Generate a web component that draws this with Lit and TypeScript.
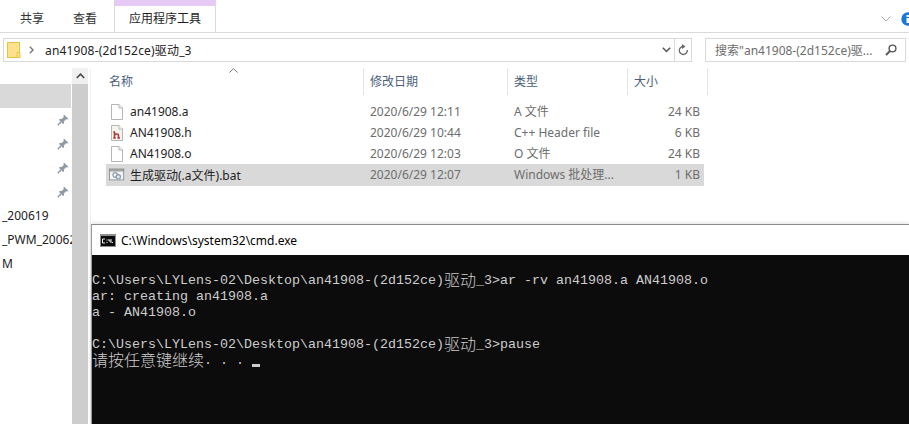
import { LitElement, html, css } from "lit";
import { customElement } from "lit/decorators.js";

const pin = html`<svg class="pin" width="12" height="12" viewBox="0 0 12 12"><path d="M7 0.5 L11.5 5 L10.3 5.6 L9 5.2 L6.9 7.4 L7 9.4 L6 10 L2 6 L2.6 5 L4.6 5.1 L6.8 3 L6.4 1.7 Z" fill="#8f9aa3"/><path d="M3.6 8 L0.8 11.2 L4 8.4" fill="none" stroke="#8f9aa3" stroke-width="1.2"/></svg>`;

const blank = html`<svg width="16" height="18" viewBox="0 0 16 18"><path d="M2.5 1.5 H10 L13.5 5 V16.5 H2.5 Z" fill="#fff" stroke="#b5b5b5"/><path d="M10 1.5 V5 H13.5" fill="#f1f1f1" stroke="#b5b5b5"/></svg>`;
const hfile = html`<svg width="16" height="18" viewBox="0 0 16 18"><path d="M2.5 1.5 H10 L13.5 5 V16.5 H2.5 Z" fill="#f5f5ee" stroke="#b5b5b5"/><path d="M10 1.5 V5 H13.5" fill="#fff" stroke="#b5b5b5"/><path d="M5.5 8 V14 M4.2 8 H6 M5.5 11 Q6.5 10 8 10 Q9.5 10 9.5 11.5 V14 M4.2 14 H6.8 M8.4 14 H11" fill="none" stroke="#b03a3a" stroke-width="1.6"/></svg>`;
const bat = html`<svg width="18" height="16" viewBox="0 0 18 16"><rect x="0.5" y="1.5" width="16" height="12" fill="#f4f4f4" stroke="#8d8d8d"/><rect x="0.5" y="1.5" width="16" height="2" fill="#b9b9b9" stroke="#8d8d8d"/><circle cx="7" cy="8" r="2.6" fill="none" stroke="#8c9aa8" stroke-width="1.3"/><circle cx="10.5" cy="10" r="2.4" fill="#dfe6ec" stroke="#7f97b0" stroke-width="1.2"/></svg>`;

const rows = [
  { name: "an41908.a", date: "2020/6/29 12:11", type: "A 文件", size: "24 KB", icon: blank },
  { name: "AN41908.h", date: "2020/6/29 10:44", type: "C++ Header file", size: "6 KB", icon: hfile },
  { name: "AN41908.o", date: "2020/6/29 12:03", type: "O 文件", size: "24 KB", icon: blank },
  { name: "生成驱动(.a文件).bat", date: "2020/6/29 12:07", type: "Windows 批处理...", size: "1 KB", icon: bat, sel: true },
];

const prompt = html`<span>C:\\Users\\LYLens-02\\Desktop\\an41908-(2d152ce)</span><span class="cjk">驱动</span><span>_3&gt;</span>`;

@customElement("app-root")
export class AppRoot extends LitElement {
  static styles = css`
    :host {
      display: block;
      position: relative;
      width: 909px;
      height: 424px;
      overflow: hidden;
      background: #fff;
      font-family: "Noto Sans", "Noto Sans CJK SC", sans-serif;
      font-size: 12px;
      color: #1e1e1e;
    }
    .ribbon {
      height: 32px;
      display: flex;
      align-items: flex-end;
      border-bottom: 1px solid #dadada;
    }
    .tab {
      height: 26px;
      line-height: 26px;
      color: #333;
    }
    .t1 { margin-left: 20px; width: 53px; }
    .t2 { width: 41px; }
    .t3 {
      width: 100px;
      text-align: center;
      height: 26px;
      border-left: 1px solid #dadada;
      border-right: 1px solid #dadada;
      border-top: 6px solid #e6c9f5;
      line-height: 26px;
      background: #fff;
    }
    .help {
      margin-left: auto;
      display: flex;
      align-items: center;
      height: 27px;
      padding-top: 5px;
      gap: 10px;
      width: 28px;
      overflow: hidden;
    }
    .help svg { flex: none; }
    .bars {
      height: 24px;
      margin: 5px 3px 0 3px;
      display: flex;
      gap: 13px;
    }
    .addr {
      width: 687px;
      border: 1px solid #d9d9d9;
      height: 22px;
      display: flex;
      align-items: center;
    }
    .folder { margin-left: 3px; flex: none; }
    .chev { margin-left: 8px; flex: none; }
    .crumb { margin-left: 11px; flex: 1; color: #222; letter-spacing: 0.17px; }
    .dd { flex: none; margin-right: 3px; }
    .refresh {
      flex: none;
      width: 16px;
      height: 22px;
      border-left: 1px solid #d9d9d9;
      display: flex;
      align-items: center;
      justify-content: center;
    }
    .search {
      border: 1px solid #d9d9d9;
      height: 22px;
      display: flex;
      align-items: center;
      color: #6d6d6d;
      padding-left: 9px;
      width: 190px;
    }
    .search span { flex: 1; white-space: nowrap; }
    .search svg { margin-right: 8px; flex: none; }
    .main {
      display: flex;
      margin-top: 6px;
    }
    .side { width: 72px; flex: none; padding-top: 16px; }
    .side .item {
      height: 24px;
      padding-left: 2px;
      white-space: nowrap;
      overflow: hidden;
      display: flex;
      align-items: center;
      justify-content: flex-end;
      color: #222;
      box-sizing: border-box;
    }
    .side .item.txt { justify-content: flex-start; padding-bottom: 2px; }
    .side .item.on { background: #d9d9d9; width: 71px; }
    .pin { margin-right: 3px; }
    .sb { width: 16px; flex: none; height: 356px; background: #cdcdcd; }
    .sb .up {
      height: 16px;
      background: #f0f0f0;
      display: flex;
      align-items: center;
      justify-content: center;
    }
    .sep { width: 1px; flex: none; background: #f0f0f0; height: 356px; margin-left: 2px; }
    .list { margin-left: 15px; flex: none; width: 602px; position: relative; }
    .hdr {
      display: grid;
      grid-template-columns: 258px 144px 120px 80px;
      height: 27px;
    }
    .hdr div {
      border-right: 1px solid #e5e5e5;
      padding-left: 6px;
      line-height: 27px;
      color: #4c607a;
    }
    .hdr div:first-child { padding-left: 3px; }
    .sort { position: absolute; left: 123px; top: 0; }
    .rows { margin-top: 6px; width: 598px; }
    .row {
      display: grid;
      grid-template-columns: 258px 144px 120px 76px;
      height: 21px;
      line-height: 21px;
      color: #6d6d6d;
    }
    .row.sel { background: #d9d9d9; height: 22px; }
    .row > div { padding-left: 6px; white-space: nowrap; }
    .row .n {
      display: flex;
      align-items: center;
      gap: 5px;
      padding-left: 3px;
      color: #1e1e1e;
    }
    .row .ic { width: 16px; height: 18px; display: flex; align-items: center; flex: none; }
    .row .s { text-align: right; padding: 0 4px 0 0; }
    .cmd {
      position: absolute;
      left: 91px;
      top: 224px;
      width: 818px;
      height: 200px;
      border-top: 1px solid #8a8a8a;
      border-left: 1px solid #9a9a9a;
      box-sizing: border-box;
      display: flex;
      flex-direction: column;
      box-shadow: 0 -1px 4px rgba(0,0,0,.12);
    }
    .cap {
      height: 30px;
      flex: none;
      background: #fff;
      display: flex;
      align-items: center;
      padding-left: 8px;
      gap: 5px;
      color: #000;
    }
    .con {
      flex: 1;
      background: #0c0c0c;
      color: #cccccc;
      padding-top: 18px;
      font-family: "Liberation Mono", "Noto Sans CJK SC", monospace;
      font-size: 13.33px;
      line-height: 16px;
    }
    .con div { height: 16px; white-space: pre; display: flex; align-items: flex-start; }
    .con .cjk {
      font-family: "Noto Sans CJK SC", sans-serif;
      font-size: 16px;
      line-height: 12px;
      font-weight: 300;
    }
    .cursor {
      width: 8px;
      height: 3px;
      background: #ccc;
      margin-top: 11px;
    }
  `;

  render() {
    return html`
      <div class="ribbon">
        <div class="tab t1">共享</div>
        <div class="tab t2">查看</div>
        <div class="t3">应用程序工具</div>
        <div class="help">
          <svg width="10" height="6" viewBox="0 0 10 6"><path d="M0.6 0.6 L5 5 L9.4 0.6" fill="none" stroke="#a9a9a9" stroke-width="1"/></svg>
          <svg width="14" height="14" viewBox="0 0 14 14"><circle cx="7" cy="7" r="6.7" fill="#1a78d6"/><rect x="5.5" y="3" width="3" height="2" fill="#fff"/><rect x="5.5" y="6" width="3" height="5" fill="#fff"/></svg>
        </div>
      </div>
      <div class="bars">
        <div class="addr">
          <svg class="folder" width="14" height="16" viewBox="0 0 14 16"><rect x="0.5" y="0.5" width="12" height="15" fill="#fde28e" stroke="#e9c23f"/><path d="M10 10.5 H13 V15.5 H10 Z" fill="#fde28e" stroke="#e9c23f"/></svg>
          <svg class="chev" width="5" height="8" viewBox="0 0 5 8"><path d="M0.8 0.8 L4 4 L0.8 7.2" fill="none" stroke="#777" stroke-width="1.4"/></svg>
          <span class="crumb">an41908-(2d152ce)驱动_3</span>
          <svg class="dd" width="9" height="6" viewBox="0 0 9 6"><path d="M0.8 0.8 L4.5 4.5 L8.2 0.8" fill="none" stroke="#555" stroke-width="1.5"/></svg>
          <div class="refresh"><svg width="11" height="12" viewBox="0 0 11 12"><path d="M5 2.5 A4 4 0 1 0 9.3 6" fill="none" stroke="#666" stroke-width="1.3"/><path d="M4 0 L7.5 2.5 L4 5 Z" fill="#666"/></svg></div>
        </div>
        <div class="search">
          <span>搜索"an41908-(2d152ce)驱...</span>
          <svg width="12" height="12" viewBox="0 0 12 12"><circle cx="7.5" cy="4.5" r="3.4" fill="none" stroke="#555" stroke-width="1.4"/><path d="M5 7 L1 11" stroke="#555" stroke-width="1.8"/></svg>
        </div>
      </div>
      <div class="main">
        <div class="side">
          <div class="item on"></div>
          <div class="item">${pin}</div>
          <div class="item">${pin}</div>
          <div class="item">${pin}</div>
          <div class="item">${pin}</div>
          <div class="item txt">_200619</div>
          <div class="item txt">_PWM_20062</div>
          <div class="item txt">M</div>
        </div>
        <div class="sb">
          <div class="up"><svg width="9" height="6" viewBox="0 0 9 6"><path d="M0.8 5 L4.5 1.2 L8.2 5" fill="none" stroke="#444" stroke-width="1.5"/></svg></div>
        </div>
        <div class="sep"></div>
        <div class="list">
          <svg class="sort" width="9" height="5" viewBox="0 0 9 5"><path d="M0.5 4.5 L4.5 0.7 L8.5 4.5" fill="none" stroke="#777"/></svg>
          <div class="hdr"><div>名称</div><div>修改日期</div><div>类型</div><div>大小</div></div>
          <div class="rows">
            ${rows.map(
              (r) => html`<div class="row ${r.sel ? "sel" : ""}">
                <div class="n"><span class="ic">${r.icon}</span><span>${r.name}</span></div>
                <div>${r.date}</div>
                <div>${r.type}</div>
                <div class="s">${r.size}</div>
              </div>`
            )}
          </div>
        </div>
      </div>
      <div class="cmd">
        <div class="cap">
          <svg width="16" height="13" viewBox="0 0 16 13"><rect x="0" y="0" width="16" height="13" fill="#8f8f8f"/><rect x="1" y="2" width="14" height="10" fill="#0c0c0c"/><path d="M2.5 5 H5 M2.5 5 V9 H5 M7 5.5 V6.5 M7 8 V9 M9 5 V7 H11 M11 5 V9 M12.5 9 V8" fill="none" stroke="#eee" stroke-width="1"/></svg>
          <span>C:\\Windows\\system32\\cmd.exe</span>
        </div>
        <div class="con">
          <div>${prompt}<span>ar -rv an41908.a AN41908.o</span></div>
          <div><span>ar: creating an41908.a</span></div>
          <div><span>a - AN41908.o</span></div>
          <div></div>
          <div>${prompt}<span>pause</span></div>
          <div><span class="cjk">请按任意键继续</span><span>. . . </span><span class="cursor"></span></div>
        </div>
      </div>
    `;
  }
}
